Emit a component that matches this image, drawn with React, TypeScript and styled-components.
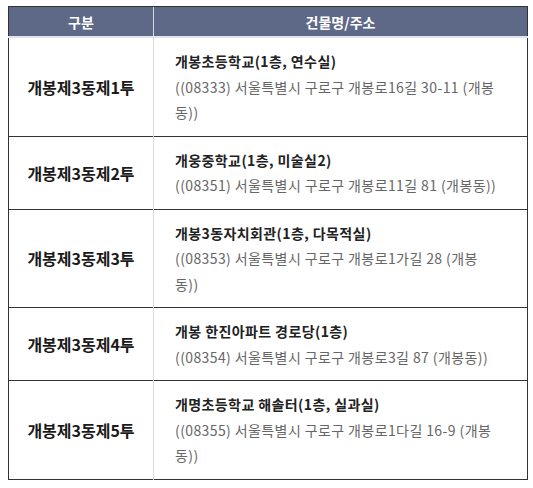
import React from 'react'
import styled, { createGlobalStyle } from 'styled-components'

type Poll = {
  name: string
  place: string
  address: string
}

const polls: Poll[] = [
  {
    name: '개봉제3동제1투',
    place: '개봉초등학교(1층, 연수실)',
    address: '((08333) 서울특별시 구로구 개봉로16길 30-11 (개봉동))',
  },
  {
    name: '개봉제3동제2투',
    place: '개웅중학교(1층, 미술실2)',
    address: '((08351) 서울특별시 구로구 개봉로11길 81 (개봉동))',
  },
  {
    name: '개봉제3동제3투',
    place: '개봉3동자치회관(1층, 다목적실)',
    address: '((08353) 서울특별시 구로구 개봉로1가길 28 (개봉동))',
  },
  {
    name: '개봉제3동제4투',
    place: '개봉 한진아파트 경로당(1층)',
    address: '((08354) 서울특별시 구로구 개봉로3길 87 (개봉동))',
  },
  {
    name: '개봉제3동제5투',
    place: '개명초등학교 해솔터(1층, 실과실)',
    address: '((08355) 서울특별시 구로구 개봉로1다길 16-9 (개봉동))',
  },
]

const GlobalStyle = createGlobalStyle`
  body {
    margin: 0;
    background: #fff;
    font-family: "Noto Sans CJK KR", "Noto Sans", sans-serif;
  }
`

export default function App() {
  return (
    <>
      <GlobalStyle />
      <SPage>
        <STable>
          <colgroup>
            <col style={{ width: 145 }} />
            <col />
          </colgroup>
          <thead>
            <tr>
              <SHeadCell>구분</SHeadCell>
              <SHeadCell>건물명/주소</SHeadCell>
            </tr>
          </thead>
          <tbody>
            {polls.map((poll) => (
              <SRow key={poll.name}>
                <SNameCell>{poll.name}</SNameCell>
                <SPlaceCell>
                  <SPlace>{poll.place}</SPlace>
                  <SAddress>{poll.address}</SAddress>
                </SPlaceCell>
              </SRow>
            ))}
          </tbody>
        </STable>
      </SPage>
    </>
  )
}

const SPage = styled.div`
  padding: 6px 6px 0 8px;
`

const STable = styled.table`
  width: 520px;
  border-collapse: collapse;
  table-layout: fixed;
  border: 1px solid #333;
`

const SHeadCell = styled.th`
  height: 29px;
  padding: 0;
  background: #5e6887;
  color: #fff;
  font-size: 14px;
  font-weight: 700;
  text-align: center;
  border-top: 1px solid #333;
  border-bottom: 2px solid #dfe5ee;
  & + & {
    border-left: 1px solid #d8dce6;
  }
`

const SRow = styled.tr`
  & + & > td {
    border-top: 1px solid #333;
  }
`

const SNameCell = styled.td`
  padding: 0;
  text-align: center;
  font-size: 16px;
  font-weight: 700;
  color: #1a1a1a;
  border-right: 1px solid #dcdcdc;
`

const SPlaceCell = styled.td`
  padding: 11px 29px 10px 21px;
  font-size: 14px;
  line-height: 25.5px;
  letter-spacing: 0.4px;
`

const SPlace = styled.div`
  font-weight: 700;
  color: #222;
`

const SAddress = styled.div`
  color: #666;
`
